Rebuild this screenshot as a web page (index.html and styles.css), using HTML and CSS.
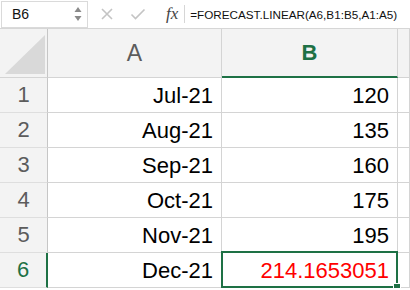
FILE: index.html
```html
<!DOCTYPE html>
<html>
<head>
	<title>FORECAST.LINEAR</title>
	<meta charset="utf-8">
	<link rel="stylesheet" href="styles.css">
</head>
<body>
<div class="formula-bar">
	<div class="name-box">
		<span class="name">B6</span>
		<span class="spin">
			<svg width="8" height="16" viewBox="0 0 8 16"><path d="M4 1 L7.5 6 L0.5 6 Z" fill="#8a8a8a"/><path d="M0.5 10 L7.5 10 L4 15 Z" fill="#8a8a8a"/></svg>
		</span>
	</div>
	<div class="tools">
		<svg class="tool" width="14" height="14" viewBox="0 0 14 14"><path d="M2 2 L12 12 M12 2 L2 12" stroke="#c4c4c4" stroke-width="1.6" fill="none"/></svg>
		<svg class="tool" width="16" height="14" viewBox="0 0 16 14"><path d="M1.5 7.5 L5.5 11.5 L14.5 2.5" stroke="#c4c4c4" stroke-width="1.6" fill="none"/></svg>
		<span class="fx">fx</span>
	</div>
	<div class="formula">=FORECAST.LINEAR(A6,B1:B5,A1:A5)</div>
</div>
<div class="sheet">
	<div class="corner"><span class="tri"></span></div>
	<div class="col-head">A</div>
	<div class="col-head active">B</div>
	<div class="col-head"></div>

	<div class="row-head">1</div><div class="cell">Jul-21</div><div class="cell">120</div><div class="cell"></div>
	<div class="row-head">2</div><div class="cell">Aug-21</div><div class="cell">135</div><div class="cell"></div>
	<div class="row-head">3</div><div class="cell">Sep-21</div><div class="cell">160</div><div class="cell"></div>
	<div class="row-head">4</div><div class="cell">Oct-21</div><div class="cell">175</div><div class="cell"></div>
	<div class="row-head">5</div><div class="cell">Nov-21</div><div class="cell">195</div><div class="cell"></div>
	<div class="row-head active">6</div><div class="cell">Dec-21</div><div class="cell selected">214.1653051</div><div class="cell"></div>
</div>
</body>
</html>
```
FILE: styles.css
```css
*{box-sizing:border-box;}
body{
	margin:0;
	background:#fff;
	font-family:"Liberation Sans",Arial,sans-serif;
	overflow:hidden;
}

/* formula bar */
.formula-bar{
	display:flex;
	align-items:center;
	height:29px;
	border-bottom:1px solid #d6d6d6;
	background:#fff;
}
.name-box{
	display:flex;
	align-items:center;
	justify-content:space-between;
	width:87px;
	height:27px;
	margin-left:1px;
	padding:0 5px 0 10px;
	border:1px solid #dadada;
	font-size:14px;
	color:#111;
}
.spin{display:flex;}
.tools{
	display:flex;
	align-items:center;
	gap:16px;
	padding:0 0 0 12px;
	height:18px;
	border-right:1px solid #d6d6d6;
	padding-right:6px;
}
.tool{display:block;}
.fx{
	font-family:"Liberation Serif","DejaVu Serif",serif;
	font-style:italic;
	font-size:17px;
	color:#444;
	margin-left:4px;
}
.formula{
	padding-left:5px;
	font-size:11.7px;
	color:#111;
	white-space:nowrap;
}

/* grid */
.sheet{
	display:grid;
	grid-template-columns:48px 174px 176px 1fr;
	grid-template-rows:49px repeat(6,35px);
}
.sheet > div{
	border-right:1px solid #d4d4d4;
	border-bottom:1px solid #d4d4d4;
}
.corner{
	position:relative;
	background:#f3f3f3;
	border-right-color:#c6c6c6 !important;
}
.corner .tri{
	position:absolute;
	right:2px;
	bottom:3px;
	width:40px;
	height:39px;
	background:#d9d9d9;
	clip-path:polygon(100% 0,100% 100%,0 100%);
}
.col-head{
	display:flex;
	align-items:center;
	justify-content:center;
	background:#f3f3f3;
	font-size:23px;
	color:#5c5c5c;
}
.col-head.active{
	color:#1e7145;
	font-weight:bold;
	font-size:22px;
	border-bottom:2px solid #1e7145 !important;
}
.row-head{
	display:flex;
	align-items:center;
	justify-content:center;
	background:#f3f3f3;
	font-size:22px;
	color:#5c5c5c;
	border-right-color:#c6c6c6 !important;
	border-bottom-color:#dedede !important;
}
.row-head.active{
	color:#1e7145;
	border-right:2px solid #1e7145 !important;
}
.cell{
	display:flex;
	align-items:center;
	justify-content:flex-end;
	padding:2px 8px 0 0;
	font-size:22px;
	color:#000;
}
.cell.selected{
	position:relative;
	color:#ff0000;
}
.cell.selected::after{
	content:"";
	position:absolute;
	left:-1px;
	top:-2px;
	right:-1px;
	bottom:-1px;
	border:2px solid #1e7145;
}
.cell.selected::before{
	content:"";
	position:absolute;
	right:-4px;
	bottom:-4px;
	width:6px;
	height:6px;
	background:#1e7145;
	border:1px solid #fff;
	z-index:1;
}
```
